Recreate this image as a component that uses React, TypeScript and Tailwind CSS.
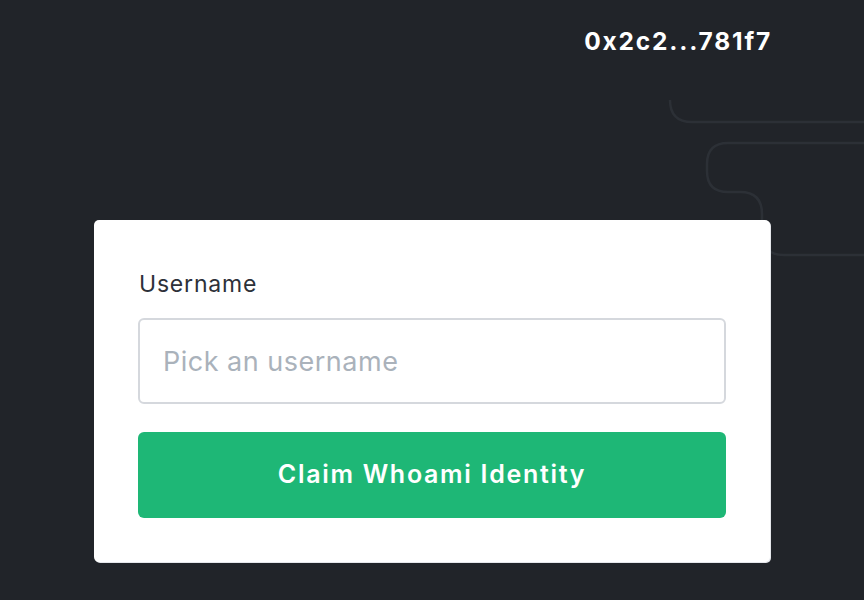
import React from "react";

export default function App() {
  return (
    <div
      className="relative w-full h-[600px] overflow-hidden bg-[#212429]"
      style={{ fontFamily: "Inter, 'Noto Sans', sans-serif" }}
    >
      <svg
        className="absolute left-0 top-0 pointer-events-none"
        width="864"
        height="600"
        viewBox="0 0 864 600"
        fill="none"
      >
        <path
          d="M670 100 Q670 122 692 122 L864 122"
          stroke="#2c3036"
          strokeWidth="2.5"
        />
        <path
          d="M864 143 L728 143 Q707 143 707 164 L707 171 Q707 192 728 192 L740 192 Q762 192 762 214 L762 233 Q762 255 784 255 L864 255"
          stroke="#2c3036"
          strokeWidth="2.5"
        />
      </svg>
      <div className="relative mx-auto w-[676px] flex flex-col">
        <div className="flex justify-end pt-[25px] h-[220px]">
          <span className="text-white font-bold text-[24.5px] leading-[32px] tracking-[1.8px] mr-[-2px]">
            0x2c2...781f7
          </span>
        </div>
        <div className="bg-white rounded-[5px] shadow-[1px_1px_0_#e5e7eb] px-[44px] pt-[49px] pb-[44px] flex flex-col">
          <label className="text-[23px] leading-[30px] tracking-[0.8px] text-[#2d3139] ml-[1px]">
            Username
          </label>
          <input
            className="mt-[19px] h-[86px] w-full border-2 border-[#d5d8dd] rounded-[6px] px-[23px] text-[27px] tracking-[0.5px] text-[#2d3139] placeholder:text-[#aab2bb] outline-none"
            placeholder="Pick an username"
          />
          <button className="mt-[28px] h-[86px] w-full rounded-[6px] bg-[#1eb776] text-white font-semibold text-[25px] tracking-[1.7px]">
            Claim Whoami Identity
          </button>
        </div>
      </div>
    </div>
  );
}
